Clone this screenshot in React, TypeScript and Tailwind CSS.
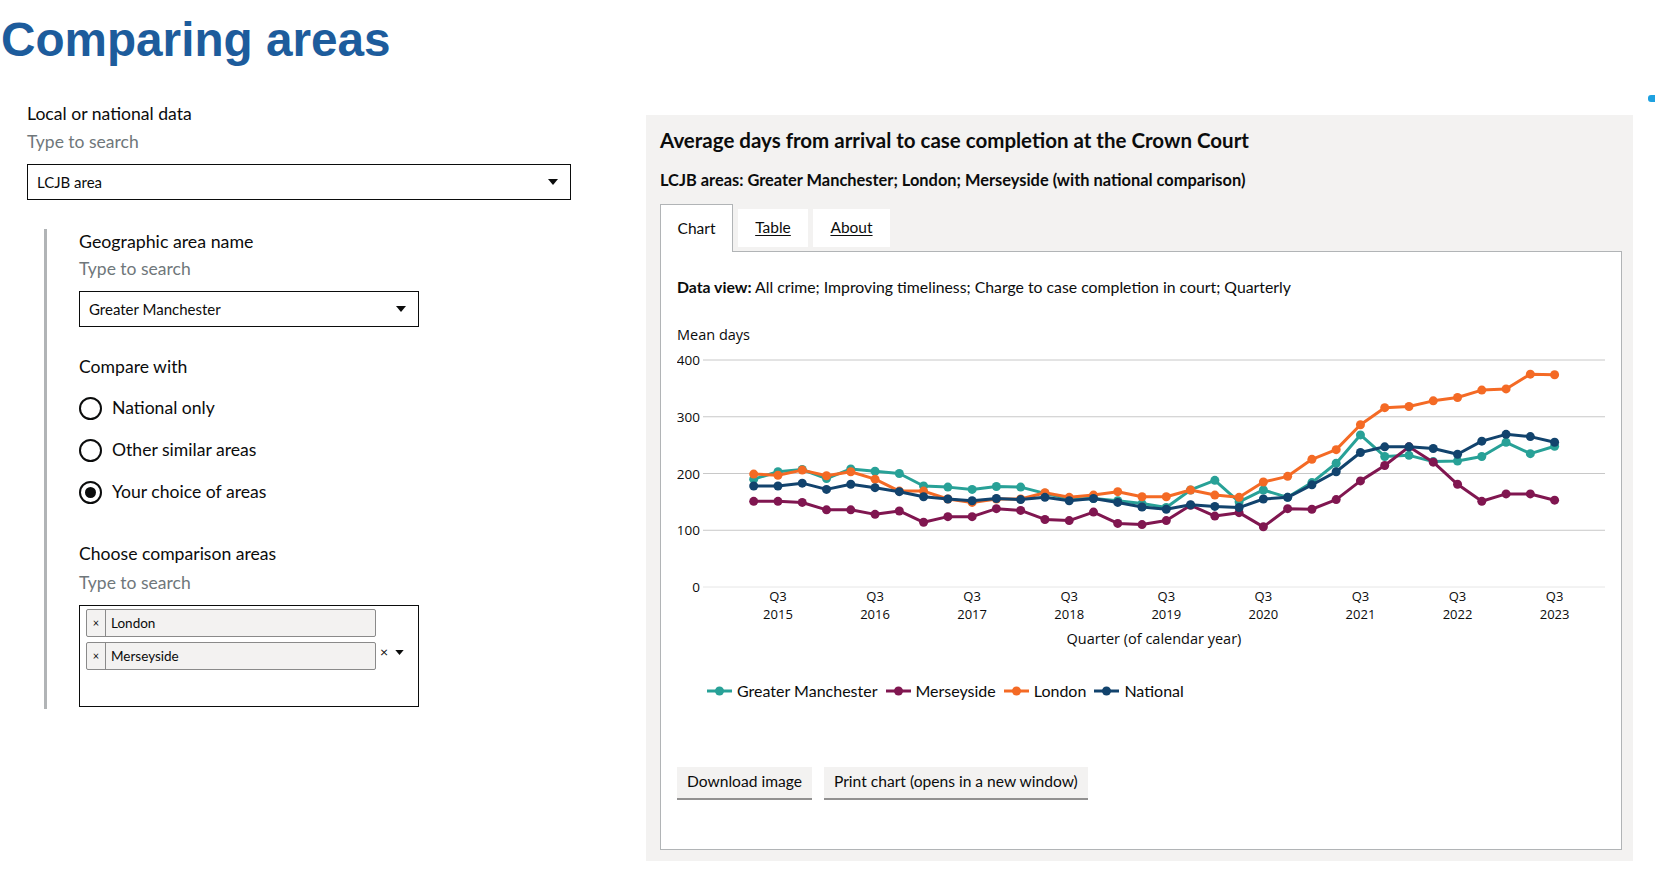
const series = [
  { name: 'Greater Manchester', color: '#28a197', data: [190, 203, 207, 191, 208, 204, 200, 178, 176, 172, 177, 176, 165, 155, 156, 152, 147, 140, 171, 188, 150, 171, 158, 184, 218, 268, 230, 232, 221, 222, 230, 255, 235, 248] },
  { name: 'Merseyside', color: '#801650', data: [151, 151, 149, 136, 136, 128, 134, 114, 124, 124, 138, 135, 119, 117, 132, 112, 110, 117, 144, 125, 131, 106, 138, 137, 154, 187, 214, 247, 220, 181, 151, 164, 164, 153] },
  { name: 'London', color: '#f46a25', data: [199, 197, 206, 196, 203, 190, 169, 169, 155, 149, 155, 155, 166, 158, 162, 168, 159, 159, 171, 162, 158, 185, 195, 225, 242, 286, 316, 318, 328, 334, 347, 349, 375, 374] },
  { name: 'National', color: '#12436d', data: [178, 178, 183, 172, 181, 175, 168, 159, 155, 152, 156, 154, 158, 152, 156, 149, 141, 137, 145, 142, 140, 155, 158, 180, 203, 237, 247, 247, 244, 234, 257, 269, 265, 255] },
];

const X0 = 76.7;
const DX = 24.27;
const qx = (i: number) => X0 + i * DX;
const vy = (v: number) => 264 - v * 0.5675;

function Select({ value, width }: { value: string; width: string }) {
  return (
    <div className={`${width} h-[36px] border-[1.5px] border-[#0b0c0c] flex items-center justify-between pl-[9px] pr-[12px] text-[15px] text-[#0b0c0c]`}>
      <span>{value}</span>
      <svg width="10" height="6" viewBox="0 0 10 6"><path d="M0 0h10L5 6z" fill="#0b0c0c" /></svg>
    </div>
  );
}

function Radio({ label, checked }: { label: string; checked?: boolean }) {
  return (
    <div className="h-[42px] flex items-center gap-[10px]">
      <div className="w-[23px] h-[23px] rounded-full border-2 border-[#0b0c0c] flex items-center justify-center">
        {checked && <div className="w-[11px] h-[11px] rounded-full bg-[#0b0c0c]" />}
      </div>
      <span className="text-[17.6px] text-[#0b0c0c]">{label}</span>
    </div>
  );
}

function Chip({ label }: { label: string }) {
  return (
    <div className="w-[290px] h-[28px] flex items-stretch bg-[#f3f2f1] border border-[#8a8a8a] rounded-[2px] text-[13.5px] text-[#0b0c0c]">
      <span className="w-[19px] flex items-center justify-center border-r border-[#8a8a8a] text-[11px]">×</span>
      <span className="flex items-center pl-[5px]">{label}</span>
    </div>
  );
}

function Chart() {
  const years = [2015, 2016, 2017, 2018, 2019, 2020, 2021, 2022, 2023];
  return (
    <svg width="944" height="330" className="block font-['Open_Sans',sans-serif]">
      <text x="0" y="17" fontSize="14.5" fill="#0b0c0c">Mean days</text>
      {[0, 100, 200, 300, 400].map((v) => (
        <g key={v}>
          <line x1="26" x2="928" y1={vy(v)} y2={vy(v)} stroke={v === 0 ? '#e6e6e6' : '#c8c8c8'} strokeWidth="1" />
          <text x="23" y={vy(v) + 5} fontSize="13.5" textAnchor="end" fill="#0b0c0c">{v}</text>
        </g>
      ))}
      {years.map((y, k) => (
        <g key={y}>
          <text x={qx(1 + k * 4)} y="278" fontSize="13" textAnchor="middle" fill="#0b0c0c">Q3</text>
          <text x={qx(1 + k * 4)} y="296" fontSize="13" textAnchor="middle" fill="#0b0c0c">{y}</text>
        </g>
      ))}
      <text x="477" y="321" fontSize="14.5" textAnchor="middle" fill="#0b0c0c">Quarter (of calendar year)</text>
      {series.map((s) => (
        <g key={s.name}>
          <polyline
            points={s.data.map((v, i) => `${qx(i)},${vy(v)}`).join(' ')}
            fill="none"
            stroke={s.color}
            strokeWidth="3"
            strokeLinejoin="round"
          />
          {s.data.map((v, i) => (
            <circle key={i} cx={qx(i)} cy={vy(v)} r="4.5" fill={s.color} />
          ))}
        </g>
      ))}
    </svg>
  );
}

function LegendItem({ name, color }: { name: string; color: string }) {
  return (
    <div className="flex items-center gap-[5px]">
      <svg width="25" height="10" viewBox="0 0 25 10">
        <line x1="0" x2="25" y1="5" y2="5" stroke={color} strokeWidth="3" />
        <circle cx="12.5" cy="5" r="4.5" fill={color} />
      </svg>
      <span>{name}</span>
    </div>
  );
}

export default function App() {
  return (
    <div className="w-[1655px] h-[871px] bg-white relative overflow-hidden font-['Lato',sans-serif] text-[#0b0c0c]">
      <h1 className="mt-[16px] pl-[1px] leading-[48px] text-[47.7px] font-bold text-[#1d5c9c] font-['Liberation_Sans',Arial,sans-serif]">
        Comparing areas
      </h1>

      <div className="absolute left-[1648px] top-[95px] w-[10px] h-[7px] rounded-[3px] bg-[#1ea1e0]" />

      <div className="mt-[38px] flex items-start">
        {/* filters */}
        <div className="w-[619px] pl-[27px] shrink-0">
          <div className="text-[17.6px] leading-[24px]">Local or national data</div>
          <div className="mt-[4px] text-[17.5px] leading-[24px] text-[#6f777b]">Type to search</div>
          <div className="mt-[10px]">
            <Select value="LCJB area" width="w-[544px]" />
          </div>

          <div className="mt-[29px] ml-[17px] border-l-[3px] border-[#b1b4b6] pl-[32px] pb-[2px]">
            <div className="text-[17.8px] leading-[24px]">Geographic area name</div>
            <div className="mt-[4px] text-[17.5px] leading-[24px] text-[#6f777b]">Type to search</div>
            <div className="mt-[10px]">
              <Select value="Greater Manchester" width="w-[340px]" />
            </div>

            <div className="mt-[28px] text-[17.6px] leading-[24px]">Compare with</div>
            <div className="mt-[8px]">
              <Radio label="National only" />
              <Radio label="Other similar areas" />
              <Radio label="Your choice of areas" checked />
            </div>

            <div className="mt-[29px] text-[17.6px] leading-[24px]">Choose comparison areas</div>
            <div className="mt-[5px] text-[17.5px] leading-[24px] text-[#6f777b]">Type to search</div>
            <div className="mt-[10px] w-[340px] h-[102px] border-[1.5px] border-[#0b0c0c] pl-[6px] pt-[3px] flex items-start">
              <div className="flex flex-col gap-[5px]">
                <Chip label="London" />
                <Chip label="Merseyside" />
              </div>
              <div className="mt-[36px] ml-[4px] flex items-center gap-[7px]">
                <span className="text-[14px] leading-none">×</span>
                <svg width="9" height="5" viewBox="0 0 10 6"><path d="M0 0h10L5 6z" fill="#0b0c0c" /></svg>
              </div>
            </div>
          </div>
        </div>

        {/* chart panel */}
        <div className="mt-[13px] ml-[27px] w-[987px] h-[746px] bg-[#f3f2f1] pl-[14px] pr-[11px] pt-[13px]">
          <h2 className="text-[20.5px] leading-[24px] font-bold">Average days from arrival to case completion at the Crown Court</h2>
          <p className="mt-[18px] text-[16.4px] leading-[20px] font-bold">
            LCJB areas: Greater Manchester; London; Merseyside (with national comparison)
          </p>

          <div className="mt-[14px] flex items-end gap-[5px] relative z-10 -mb-px">
            <div className="w-[73px] h-[48px] bg-white border border-b-0 border-[#b1b4b6] flex items-center justify-center text-[15.5px]">
              Chart
            </div>
            <div className="w-[70px] h-[38px] mb-[5px] bg-white flex items-center justify-center text-[15.5px] underline underline-offset-2">
              Table
            </div>
            <div className="w-[77px] h-[38px] mb-[5px] bg-white flex items-center justify-center text-[15.5px] underline underline-offset-2">
              About
            </div>
          </div>

          <div className="border border-[#b1b4b6] bg-white pl-[16px] pt-[23px] pb-[51px]">
            <div className="text-[15.8px] leading-[24px]">
              <span className="font-bold">Data view:</span> All crime; Improving timeliness; Charge to case completion in court; Quarterly
            </div>
            <div className="mt-[24px]">
              <Chart />
            </div>
            <div className="mt-[26px] pl-[30px] h-[24px] flex items-center gap-[8px] text-[16px]">
              {series.map((s) => (
                <LegendItem key={s.name} name={s.name} color={s.color} />
              ))}
            </div>
            <div className="mt-[64px] flex gap-[12px] text-[15.6px]">
              <button className="h-[31px] px-[10px] bg-[#f3f2f1] shadow-[0_2px_0_#929191] pb-[1px]">Download image</button>
              <button className="h-[31px] px-[10px] bg-[#f3f2f1] shadow-[0_2px_0_#929191] pb-[1px]">Print chart (opens in a new window)</button>
            </div>
          </div>
        </div>
      </div>
    </div>
  );
}
